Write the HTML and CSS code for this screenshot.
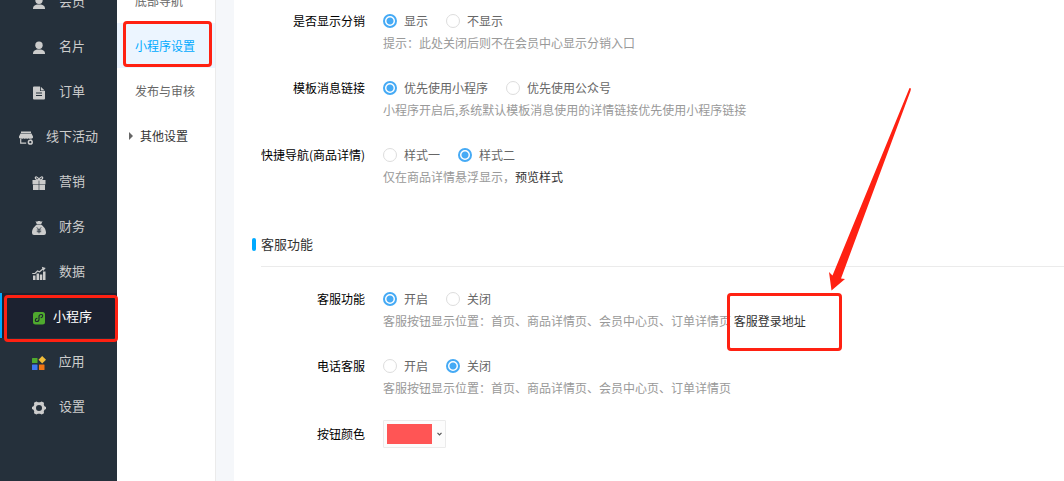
FILE: index.html
```html
<!DOCTYPE html>
<html lang="zh-CN">
<head>
<meta charset="utf-8">
<title>小程序设置</title>
<link rel="stylesheet" href="styles.css">
</head>
<body>
<div class="page">
  <nav class="sidebar" aria-label="主导航">
    <a class="nav-item" href="#"><svg class="icon" viewBox="0 0 14 14"><circle cx="7" cy="4.300" r="3.700"/><path d="M1 13v-.8c0-2.200 2-3.200 4-3.600h4c2 .4 4 1.400 4 3.600v.8z"/></svg><span>会员</span></a>
    <a class="nav-item" href="#"><svg class="icon" viewBox="0 0 14 14"><circle cx="7" cy="4.300" r="3.700"/><path d="M1 13v-.8c0-2.200 2-3.200 4-3.600h4c2 .4 4 1.400 4 3.600v.8z"/></svg><span>名片</span></a>
    <a class="nav-item" href="#"><svg class="icon" viewBox="0 0 14 14"><path fill-rule="evenodd" d="M2 .5h6v4.500h5V12.500a1 1 0 0 1-1 1H2a1 1 0 0 1-1-1v-11a1 1 0 0 1 1-1zM4 6.500v1h6v-1zM4 9v1h6V9z"/><path d="M8.800.8 12.700 4.500H8.800z"/></svg><span>订单</span></a>
    <a class="nav-item" href="#"><svg class="icon" viewBox="0 0 14 14"><path d="M2 .5h10v1.500H2zM1.500 2.600h11L14 5.500v1.200a1.500 1.500 0 0 1-2 .6 2 2 0 0 1-2.500 0 2 2 0 0 1-2.500 0 2 2 0 0 1-2.500 0 2 2 0 0 1-2.500 0 1.500 1.500 0 0 1-2-.6V5.500z"/><path d="M1.700 7.500v4.700h5.500M12 7.500v1" fill="none" stroke="#ccc" stroke-width="1.200"/><circle cx="11.300" cy="11.200" r="1.900" fill="none" stroke="#ccc" stroke-width="1.500"/></svg><span>线下活动</span></a>
    <a class="nav-item" href="#"><svg class="icon" viewBox="0 0 14 14"><path d="M.5 4h6.200v4.300H.5zM7.300 4h6.200v4.300H7.300zM1 8.800h5.700V14H1zM7.300 8.800H13V14H7.300z"/><path d="M6.800 4C5 4 3.300 3 3.300 1.800S5.700.2 7 3.600C8.300.2 10.700.6 10.700 1.800S9 4 7.200 4" fill="none" stroke="#ccc" stroke-width="1.200"/></svg><span>营销</span></a>
    <a class="nav-item" href="#"><svg class="icon" viewBox="0 0 14 14"><path d="M3.500 0 5 .7 6 0h2l1 .7 1.500-.7-1.300 3.200H4.800zM4.800 3.800h4.400C11.400 5.300 14 8 14 11.500c0 1.700-.8 2.500-2 2.500H2c-1.200 0-2-.8-2-2.500C0 8 2.600 5.300 4.800 3.800z"/><path d="m4.800 6.300 2.200 2.500 2.200-2.500M7 8.800v3.500M4.800 9h4.400M4.800 10.700h4.400" fill="none" stroke="#25303b" stroke-width=".8"/></svg><span>财务</span></a>
    <a class="nav-item" href="#"><svg class="icon" viewBox="0 0 14 14"><path d="M1 9.500h2.500V14H1zM4.500 7.500H7V14H4.500zM7.800 8.500h2.500V14H7.800zM11 5.500h2.500V14H11z"/><path d="M.3 7.500H3L5.500 5l2 .8 4-3.300" fill="none" stroke="#ccc" stroke-width="1.200"/><path d="m9.800.8 3.900 1.200-2.500 3z"/></svg><span>数据</span></a>
    <a class="nav-item nav-item--active" href="#" aria-current="page"><svg class="icon" viewBox="0 0 14 14"><rect x="1" y="1" width="12" height="12.500" rx="2.500" fill="#4faa2e"/><path d="M5 7.300c-2 .3-2.300 3.200-.3 3.200 1.300 0 2.300-.8 2.300-2V5.500c0-1.200 1-2 2.300-2 2 0 1.700 2.900-.3 3.200" fill="none" stroke="#1c2230" stroke-width="1.100" stroke-linecap="round"/></svg><span>小程序</span></a>
    <a class="nav-item nav-item--apps" href="#"><svg class="icon" viewBox="0 0 14 14"><rect x="0" y="2" width="5.500" height="5" rx=".5" fill="#4faa2e"/><path d="m10.200 0 3.800 3.700-3.800 3.700-3.700-3.700z" fill="#f2bd3a"/><rect x="0" y="8.500" width="5.500" height="5.500" rx=".5" fill="#3f77ee"/><rect x="7" y="8.500" width="5.500" height="5.500" rx=".5" fill="#f27414"/></svg><span>应用</span></a>
    <a class="nav-item" href="#"><svg class="icon" viewBox="0 0 14 14"><path d="M4.300.5 6 1.300h2l1.700-.8 2.300 1.300-.2 2L12.500 5.300l1.500.8v1.800l-1.500.8-.7 1.500.2 2-2.300 1.300-1.700-.8H6l-1.700.8L2 12.200l.2-2-.7-1.500L0 7.900V6.100l1.500-.8.7-1.500-.2-2zM7 4a3 3 0 1 0 0 6 3 3 0 0 0 0-6z" fill-rule="evenodd"/></svg><span>设置</span></a>
  </nav>

  <nav class="submenu" aria-label="小程序">
    <a class="sub-item" href="#">底部导航</a>
    <a class="sub-item sub-item--active" href="#" aria-current="page">小程序设置</a>
    <a class="sub-item" href="#">发布与审核</a>
    <a class="sub-item sub-item--group" href="#"><span class="caret"></span>其他设置</a>
  </nav>

  <main class="content">
    <form class="form">
      <div class="row" role="radiogroup" aria-labelledby="l1">
        <span class="label" id="l1">是否显示分销</span>
        <div class="field">
          <div class="options">
            <label class="option"><input type="radio" name="dist" checked>显示</label>
            <label class="option"><input type="radio" name="dist">不显示</label>
          </div>
          <p class="hint">提示：此处关闭后则不在会员中心显示分销入口</p>
        </div>
      </div>
      <div class="row" role="radiogroup" aria-labelledby="l2">
        <span class="label" id="l2">模板消息链接</span>
        <div class="field">
          <div class="options">
            <label class="option"><input type="radio" name="tpl" checked>优先使用小程序</label>
            <label class="option"><input type="radio" name="tpl">优先使用公众号</label>
          </div>
          <p class="hint">小程序开启后,系统默认模板消息使用的详情链接优先使用小程序链接</p>
        </div>
      </div>
      <div class="row" role="radiogroup" aria-labelledby="l3">
        <span class="label" id="l3">快捷导航(商品详情)</span>
        <div class="field">
          <div class="options">
            <label class="option"><input type="radio" name="quick">样式一</label>
            <label class="option"><input type="radio" name="quick" checked>样式二</label>
          </div>
          <p class="hint">仅在商品详情悬浮显示，<a href="#">预览样式</a></p>
        </div>
      </div>

      <h2 class="section-title">客服功能</h2>

      <div class="row" role="radiogroup" aria-labelledby="l4">
        <span class="label" id="l4">客服功能</span>
        <div class="field">
          <div class="options">
            <label class="option"><input type="radio" name="service" checked>开启</label>
            <label class="option"><input type="radio" name="service">关闭</label>
          </div>
          <p class="hint">客服按钮显示位置：首页、商品详情页、会员中心页、订单详情页 <a href="#">客服登录地址</a></p>
        </div>
      </div>
      <div class="row" role="radiogroup" aria-labelledby="l5">
        <span class="label" id="l5">电话客服</span>
        <div class="field">
          <div class="options">
            <label class="option"><input type="radio" name="phone">开启</label>
            <label class="option"><input type="radio" name="phone" checked>关闭</label>
          </div>
          <p class="hint">客服按钮显示位置：首页、商品详情页、会员中心页、订单详情页</p>
        </div>
      </div>
      <div class="row row--color">
        <label class="label" for="color">按钮颜色</label>
        <button class="color-button" id="color" type="button">
          <span class="swatch"></span>
          <svg class="chevron" viewBox="0 0 5 4"><path d="M.5.800 2.500 2.800 4.500.8" fill="none" stroke="#555" stroke-width="1.200"/></svg>
        </button>
      </div>
    </form>
  </main>

  <div class="mark mark--submenu"></div>
  <div class="mark mark--nav"></div>
  <div class="mark mark--link"></div>
  <svg class="arrow" viewBox="0 0 84 204"><path d="M81.500 1 83 1.500 82.500 4 13 191.500 17 192 3.500 203.500 1 185 4.500 188.500z" fill="#ff2112"/></svg>
</div>
</body>
</html>
```
FILE: styles.css
```css
* {
  box-sizing: border-box;
}

body {
  margin: 0;
  font: 12px/22px "Noto Sans CJK SC", sans-serif;
  color: #666;
  background: #f5f7fa;
}

a {
  color: inherit;
  text-decoration: none;
}

.page {
  position: relative;
  display: flex;
  height: 100vh;
  overflow: hidden;
}

/* Main navigation */
.sidebar {
  flex: none;
  width: 117px;
  background: #25303b;
}

.nav-item {
  display: flex;
  align-items: center;
  justify-content: center;
  gap: 13px;
  height: 45px;
  font-size: 13px;
  color: #ccc;
}

.nav-item:first-child,
.sub-item:first-child {
  margin-top: -22px;
}

.nav-item--active {
  gap: 7px;
  padding-left: 5px;
  border-left: 2px solid #00aaff;
  background: #1c2230;
  color: #fff;
}

.nav-item--apps {
  gap: 12px;
}

.icon {
  flex: none;
  width: 14px;
  height: 14px;
  margin-top: 4px;
  fill: #ccc;
}

/* Second-level menu */
.submenu {
  flex: none;
  width: 99px;
  border-right: 1px solid #ebebeb;
  background: #fff;
}

.sub-item {
  display: flex;
  align-items: center;
  height: 45px;
  padding-left: 18px;
}

.sub-item--active {
  background: #ecf5ff;
  color: #00aaff;
}

.sub-item--group {
  gap: 7px;
  padding-left: 12px;
  color: #333;
}

.caret {
  border-left: 4px solid #666;
  border-top: 4px solid transparent;
  border-bottom: 4px solid transparent;
}

/* Settings form */
.content {
  flex: 1;
  min-width: 0;
  margin-left: 18px;
  padding-top: 10px;
  background: #fff;
}

.row {
  display: flex;
  gap: 18px;
  margin-bottom: 23px;
}

.label {
  flex: none;
  width: 131px;
  text-align: right;
  white-space: nowrap;
  color: #000;
}

.options {
  display: flex;
  gap: 18px;
}

.option {
  display: flex;
  align-items: center;
  gap: 7px;
}

.option input {
  appearance: none;
  width: 14px;
  height: 14px;
  margin: 0;
  border: 1px solid #ddd;
  border-radius: 50%;
  background: #fff;
}

.option input:checked {
  border: 2px solid #45aaf5;
  background: radial-gradient(circle, #45aaf5 3px, #fff 4px);
}

.hint {
  margin: 0;
  color: #999;
}

.hint a {
  color: #333;
}

.section-title {
  position: relative;
  margin: 45px 0 21px 27px;
  padding-bottom: 11px;
  border-bottom: 1px solid #ebebeb;
  font-size: 13px;
  font-weight: 400;
  line-height: 22px;
  color: #333;
}

.section-title::before {
  content: "";
  position: absolute;
  top: 5px;
  left: -9px;
  width: 4px;
  height: 13px;
  border-radius: 2px;
  background: #00aaff;
}

.row--color {
  align-items: center;
  margin-top: -2px;
}

.color-button {
  display: flex;
  align-items: center;
  gap: 5px;
  padding: 3px;
  border: 1px solid #ebebeb;
  border-radius: 1px;
  background: #fcfcfc;
}

.swatch {
  width: 45px;
  height: 20px;
  background: #ff5555;
}

.chevron {
  width: 5px;
  height: 4px;
}

/* Highlights drawn over the interface */
.mark {
  position: absolute;
  border: 3px solid #ff2112;
  border-radius: 4px;
  pointer-events: none;
}

.mark--submenu {
  left: 123px;
  top: 21px;
  width: 89px;
  height: 46px;
}

.mark--nav {
  left: 4px;
  top: 295px;
  width: 114px;
  height: 47px;
}

.mark--link {
  left: 727px;
  top: 293px;
  width: 115px;
  height: 58px;
}

.arrow {
  position: absolute;
  left: 828px;
  top: 87px;
  width: 84px;
  height: 204px;
  pointer-events: none;
}
```
